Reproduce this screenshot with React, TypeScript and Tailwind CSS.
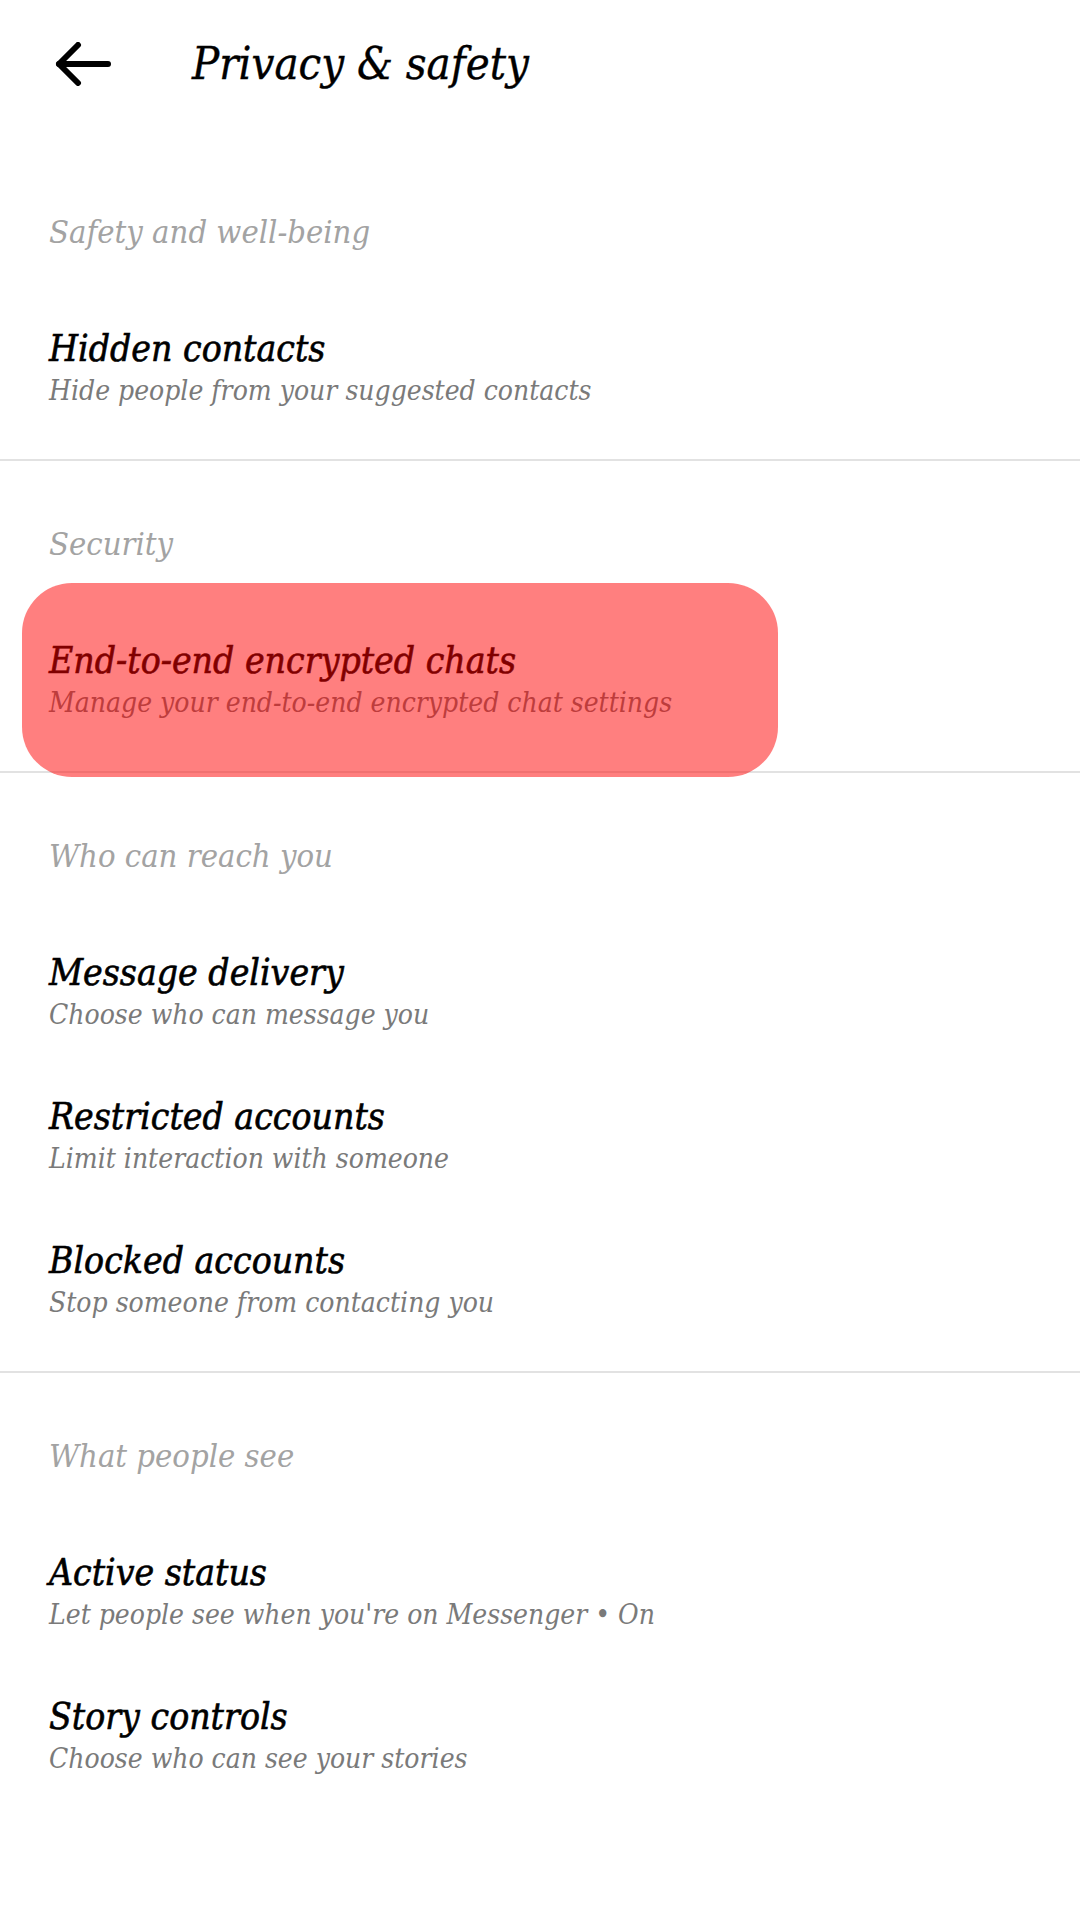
import React from 'react';

type Item = { title: string; sub: string; highlight?: boolean };
type Section = { label: string; items: Item[]; divider?: boolean };

const SECTIONS: Section[] = [
  {
    label: 'Safety and well-being',
    items: [{ title: 'Hidden contacts', sub: 'Hide people from your suggested contacts' }],
    divider: true,
  },
  {
    label: 'Security',
    items: [
      {
        title: 'End-to-end encrypted chats',
        sub: 'Manage your end-to-end encrypted chat settings',
        highlight: true,
      },
    ],
    divider: true,
  },
  {
    label: 'Who can reach you',
    items: [
      { title: 'Message delivery', sub: 'Choose who can message you' },
      { title: 'Restricted accounts', sub: 'Limit interaction with someone' },
      { title: 'Blocked accounts', sub: 'Stop someone from contacting you' },
    ],
    divider: true,
  },
  {
    label: 'What people see',
    items: [
      { title: 'Active status', sub: "Let people see when you're on Messenger • On" },
      { title: 'Story controls', sub: 'Choose who can see your stories' },
    ],
  },
];

const FONT = "font-['DejaVu_Serif_Condensed','DejaVu_Serif',serif] italic font-stretch-condensed";

function BackArrow() {
  return (
    <svg width="56" height="44" viewBox="0 0 56 44" fill="none" stroke="#000" strokeWidth="6" strokeLinecap="round" strokeLinejoin="round">
      <path d="M23 3 4 22l19 19" />
      <path d="M4 22h49" />
    </svg>
  );
}

function Row({ item }: { item: Item }) {
  return (
    <div className="relative px-[49px] py-[30px]">
      {item.highlight && (
        <div className="absolute left-[22px] w-[756px] top-[-26px] bottom-[-24px] rounded-[50px] bg-[#ff0000]/50 z-10" />
      )}
      <div className="text-[37px] leading-[44px] text-black [-webkit-text-stroke:0.6px_#000]">{item.title}</div>
      <div className="text-[28px] leading-[40px] text-[#7a7a7a]">{item.sub}</div>
    </div>
  );
}

export default function App() {
  return (
    <div className={`w-[1080px] min-h-[1920px] bg-white ${FONT}`}>
      {/* Header */}
      <div className="h-[128px] flex items-center">
        <div className="pl-[55px] w-[192px] not-italic">
          <BackArrow />
        </div>
        <h1 className="text-[45px] leading-[56px] text-black [-webkit-text-stroke:0.4px_#000]">Privacy &amp; safety</h1>
      </div>

      {SECTIONS.map((s, i) => (
        <div key={s.label} className={`${i === 0 ? 'pt-[84px]' : 'pt-[63px]'} ${s.divider ? 'pb-[18px] border-b-2 border-[#e2e2e2]' : ''}`}>
          <div className="px-[49px] mb-[45px] text-[32.5px] leading-[40px] text-[#a3a3a3]">{s.label}</div>
          {s.items.map(it => (
            <Row key={it.title} item={it} />
          ))}
        </div>
      ))}
    </div>
  );
}
